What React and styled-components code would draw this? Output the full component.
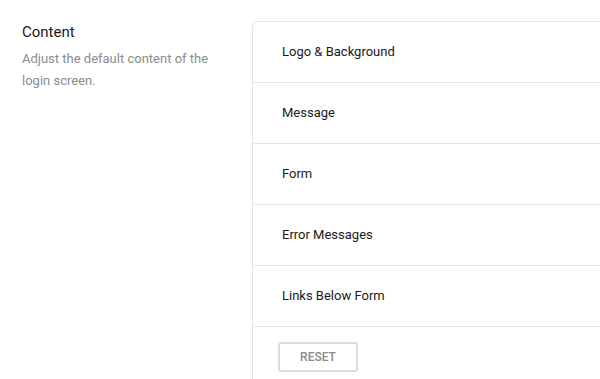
import styled, { createGlobalStyle } from "styled-components"

const GlobalStyle = createGlobalStyle`
  html, body {
    margin: 0;
    padding: 0;
    background: #fff;
    font-family: Roboto, "Liberation Sans", sans-serif;
  }
`

const Page = styled.div`
  display: grid;
  grid-template-columns: 230px 1fr;
  padding: 21px 0 0 22px;
  width: 600px;
  box-sizing: border-box;
  overflow: hidden;
`

const Intro = styled.div`
  padding-top: 1px;
`

const Title = styled.h2`
  margin: 0;
  font-size: 15px;
  font-weight: 400;
  line-height: 20px;
  color: #1a1a1a;
`

const Description = styled.p`
  margin: 6px 0 0;
  font-size: 13px;
  line-height: 22px;
  color: #8c8c8c;
  width: 200px;
`

const Card = styled.div`
  width: 420px;
  border: 1px solid #e4e4e4;
  border-radius: 4px 0 0 0;
  background: #fff;
`

const Row = styled.div`
  height: 61px;
  box-sizing: border-box;
  display: flex;
  align-items: center;
  padding: 0 0 2px 29px;
  border-bottom: 1px solid #e4e4e4;
  font-size: 13px;
  font-weight: 400;
  color: #1a1a1a;
`

const Footer = styled.div`
  padding: 15px 0 20px 25px;
`

const ResetButton = styled.button`
  width: 80px;
  height: 30px;
  border: 2px solid #dcdcdc;
  border-radius: 3px;
  background: #fff;
  font-family: Roboto, "Liberation Sans", sans-serif;
  font-size: 12px;
  font-weight: 500;
  color: #8a8a8a;
  cursor: pointer;
`

const sections = [
  "Logo & Background",
  "Message",
  "Form",
  "Error Messages",
  "Links Below Form",
]

export default function App() {
  return (
    <>
      <GlobalStyle />
      <Page>
        <Intro>
          <Title>Content</Title>
          <Description>Adjust the default content of the login screen.</Description>
        </Intro>
        <Card>
          {sections.map((s) => (
            <Row key={s}>{s}</Row>
          ))}
          <Footer>
            <ResetButton>RESET</ResetButton>
          </Footer>
        </Card>
      </Page>
    </>
  )
}
